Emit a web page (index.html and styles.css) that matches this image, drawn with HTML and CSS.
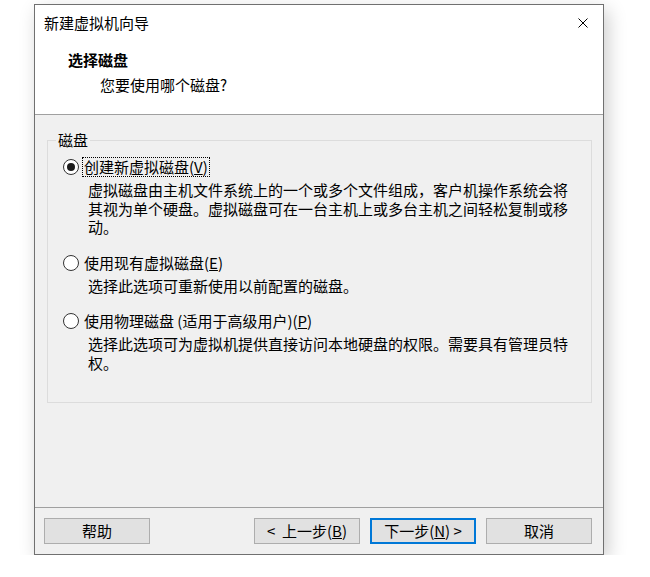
FILE: index.html
```html
<!DOCTYPE html>
<html lang="zh-CN">
<head>
<meta charset="utf-8">
<title>新建虚拟机向导</title>
<link rel="stylesheet" href="styles.css">
</head>
<body>
<div class="window">
  <div class="titlebar">
    <span class="title">新建虚拟机向导</span>
    <svg class="close" width="10" height="10" viewBox="0 0 10 10"><path d="M0.5 0.5 L9.5 9.5 M9.5 0.5 L0.5 9.5" stroke="#000" stroke-width="1" fill="none"/></svg>
  </div>
  <div class="header">
    <div class="h-title">选择磁盘</div>
    <div class="h-sub">您要使用哪个磁盘?</div>
  </div>
  <div class="content">
    <fieldset class="group">
      <legend>磁盘</legend>
      <div class="options">
        <div class="opt">
          <div class="row"><span class="radio checked"></span><span class="label focus">创建新虚拟磁盘(<u>V</u>)</span></div>
          <div class="desc">虚拟磁盘由主机文件系统上的一个或多个文件组成，客户机操作系统会将其视为单个硬盘。虚拟磁盘可在一台主机上或多台主机之间轻松复制或移动。</div>
        </div>
        <div class="opt">
          <div class="row"><span class="radio"></span><span class="label">使用现有虚拟磁盘(<u>E</u>)</span></div>
          <div class="desc">选择此选项可重新使用以前配置的磁盘。</div>
        </div>
        <div class="opt">
          <div class="row"><span class="radio"></span><span class="label">使用物理磁盘 (适用于高级用户)(<u>P</u>)</span></div>
          <div class="desc">选择此选项可为虚拟机提供直接访问本地硬盘的权限。需要具有管理员特权。</div>
        </div>
      </div>
    </fieldset>
  </div>
  <div class="footer">
    <button class="btn">帮助</button>
    <div class="nav">
      <button class="btn">&lt;&nbsp; 上一步(<u>B</u>)</button>
      <button class="btn default">下一步(<u>N</u>) &gt;</button>
      <button class="btn">取消</button>
    </div>
  </div>
</div>
</body>
</html>
```

FILE: styles.css
```css
* { box-sizing: border-box; }
html, body { margin: 0; padding: 0; background: #fff; }
body {
  font-family: "Noto Sans CJK SC", "Noto Sans", sans-serif;
  font-size: 15px;
  color: #000;
}
.window {
  margin: 4px 0 0 34px;
  width: 570px;
  height: 551px;
  border: 1px solid #707070;
  background: #f0f0f0;
  display: flex;
  flex-direction: column;
  box-shadow: 4px 6px 18px rgba(0,0,0,0.2);
}
.titlebar {
  height: 36px;
  background: #fff;
  display: flex;
  align-items: center;
  justify-content: space-between;
  padding: 0 15px 0 9px;
  line-height: 18px;
}
.close { display: block; margin-top: -1px; }
.header {
  height: 74px;
  background: #fff;
  padding: 10px 0 0 33px;
  line-height: 18px;
  border-bottom: 1px solid #a0a0a0;
}
.h-title { font-weight: bold; }
.h-sub { margin-top: 7px; padding-left: 32px; }
.content {
  flex: 1;
  padding: 16px 11px 0 12px;
}
.group {
  margin: 0;
  padding: 0;
  border: 1px solid #dcdcdc;
  min-width: 0;
}
.group legend {
  margin-left: 8px;
  padding: 0 2px;
  line-height: 18px;
}
.options { padding: 8px 0 30px 15px; }
.opt + .opt { margin-top: 16px; }
.row {
  display: flex;
  align-items: center;
  height: 20px;
}
.radio {
  flex: none;
  width: 16px;
  height: 16px;
  border: 1px solid #333;
  border-radius: 50%;
  background: #fff;
  display: flex;
  align-items: center;
  justify-content: center;
  margin-right: 4px;
}
.radio.checked::after {
  content: "";
  width: 8px;
  height: 8px;
  border-radius: 50%;
  background: #1a1a1a;
}
.label { line-height: 18px; padding: 0 1px; }
.label.focus { outline: 1px dotted #000; outline-offset: 0; }
.desc {
  margin: 4px 0 0 25px;
  width: 484px;
  line-height: 18.5px;
}
.footer {
  border-top: 1px solid #a0a0a0;
  padding: 10px 11px 10px 9px;
  display: flex;
  justify-content: space-between;
}
.nav { display: flex; gap: 10px; }
.btn {
  width: 106px;
  height: 26px;
  border: 1px solid #adadad;
  background: #e1e1e1;
  font-family: inherit;
  font-size: 15px;
  color: #000;
  padding: 0;
  line-height: 18px;
}
.btn.default { border: 2px solid #0078d7; }
```
